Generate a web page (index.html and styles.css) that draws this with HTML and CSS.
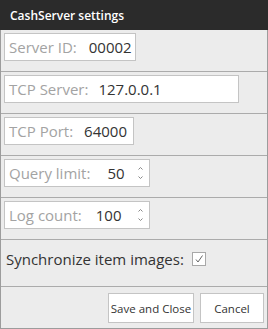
FILE: index.html
```
<!DOCTYPE html>
<html lang="en">
<head>
  <meta charset="UTF-8">
  <title>CashServer settings</title>
  <link rel="stylesheet" href="styles.css">
</head>
<body>
  <div class="window">
    <div class="title">CashServer settings</div>

    <div class="row">
      <div class="field w-id"><span class="lbl">Server ID:</span><span class="val v-id">00002</span></div>
    </div>
    <div class="row">
      <div class="field w-server"><span class="lbl">TCP Server:</span><span class="val v-server">127.0.0.1</span></div>
    </div>
    <div class="row">
      <div class="field w-port"><span class="lbl">TCP Port:</span><span class="val v-port">64000</span></div>
    </div>
    <div class="row">
      <div class="field w-spin"><span class="lbl">Query limit:</span><span class="val v-query">50</span>
        <span class="spin">
          <svg width="7" height="18" viewBox="0 0 7 18"><path d="M1.5 5.5 L3.5 3.5 L5.5 5.5" fill="none" stroke="#888" stroke-width="1"/><path d="M1.5 12.5 L3.5 14.5 L5.5 12.5" fill="none" stroke="#888" stroke-width="1"/></svg>
        </span>
      </div>
    </div>
    <div class="row">
      <div class="field w-spin"><span class="lbl">Log count:</span><span class="val v-log">100</span>
        <span class="spin">
          <svg width="7" height="18" viewBox="0 0 7 18"><path d="M1.5 5.5 L3.5 3.5 L5.5 5.5" fill="none" stroke="#888" stroke-width="1"/><path d="M1.5 12.5 L3.5 14.5 L5.5 12.5" fill="none" stroke="#888" stroke-width="1"/></svg>
        </span>
      </div>
    </div>
    <div class="row sync">
      <span class="sync-lbl">Synchronize item images:</span>
      <span class="check">
        <svg width="12" height="12" viewBox="0 0 12 12"><path d="M3 6.5 L5 9 L9.5 2.5" fill="none" stroke="#666" stroke-width="1"/></svg>
      </span>
    </div>

    <div class="buttons">
      <button class="btn btn-save">Save and Close</button>
      <button class="btn btn-cancel">Cancel</button>
    </div>
  </div>
</body>
</html>
```

FILE: styles.css
```
*{
  margin: 0;
  padding: 0;
  box-sizing: border-box;
}
body{
  width: 268px;
  height: 329px;
  background: #ececec;
  font-family: "Open Sans", "Noto Sans", sans-serif;
  overflow: hidden;
}
.window{
  width: 268px;
  height: 329px;
  border-left: 1px solid #9c9c9c;
  border-right: 1px solid #9c9c9c;
  border-bottom: 1px solid #9c9c9c;
  background: #ececec;
  display: flex;
  flex-direction: column;
}
.title{
  height: 30px;
  background: #2b2b2b;
  color: #fff;
  font-size: 12px;
  font-weight: 600;
  padding: 7px 0 0 10px;
  margin: 0 -1px;
}
.row{
  height: 42px;
  border-bottom: 1px solid #ababab;
  padding: 3px 0 0 3px;
}
.field{
  display: flex;
  align-items: center;
  height: 28px;
  background: #fff;
  border: 1px solid #c4c4c4;
  padding: 0 0 0 4px;
  font-size: 15px;
}
.w-id{ width: 132px; }
.w-server{ width: 235px; }
.w-port{ width: 130px; }
.w-spin{ width: 146px; }
.lbl{
  color: #a3a3a3;
}
.val{
  color: #333;
}
.v-id{ margin-left: 12px; }
.v-server{ margin-left: 10px; }
.v-port{ margin-left: 11px; }
.v-query{ margin-left: 17px; }
.v-log{ margin-left: 14px; }
.spin{
  display: flex;
  margin-left: auto;
  margin-right: 5px;
}
.sync{
  height: 47px;
  display: flex;
  align-items: flex-start;
  padding: 9px 0 0 5px;
  gap: 8px;
}
.sync-lbl{
  font-size: 15px;
  color: #333;
}
.check{
  display: flex;
  align-items: center;
  justify-content: center;
  width: 14px;
  height: 14px;
  margin-top: 3px;
  background: #fff;
  border: 1px solid #a8a8a8;
}
.buttons{
  display: flex;
  justify-content: flex-end;
  gap: 6px;
  padding: 6px 3px 0 0;
}
.btn{
  height: 30px;
  background: #fff;
  border: 1px solid #c4c4c4;
  font-family: "Open Sans", "Noto Sans", sans-serif;
  font-size: 11.5px;
  color: #333;
}
.btn-save{ width: 86px; }
.btn-cancel{ width: 64px; }
```
